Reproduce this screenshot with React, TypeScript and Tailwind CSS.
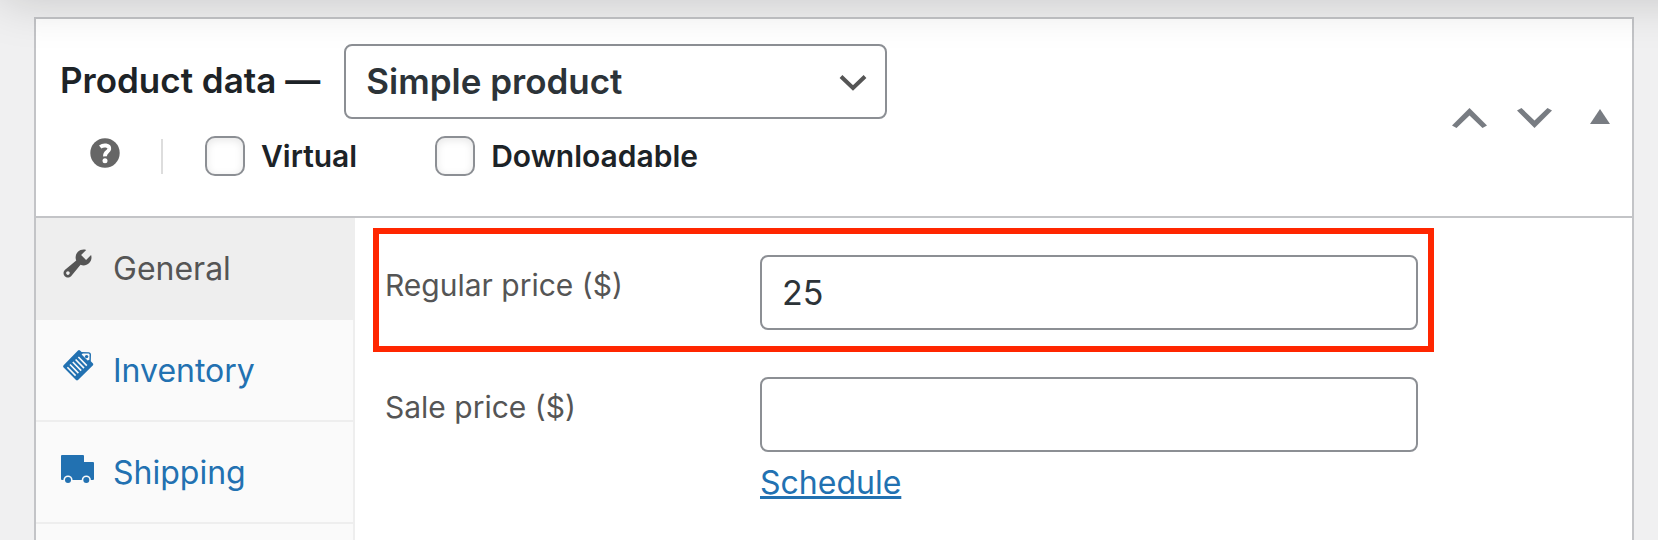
import { useState } from 'react';
import type { ReactNode } from 'react';

interface TabProps {
  label: string;
  icon: ReactNode;
  active?: boolean;
}

function WrenchIcon() {
  return (
    <svg viewBox="0 0 36 36" className="mb-2.5 size-9 shrink-0" fill="currentColor" aria-hidden="true">
      <path
        transform="scale(1.75)"
        fillRule="evenodd"
        d="M16.68 9.77c-1.34 1.34-3.3 1.67-4.95.99l-5.41 6.52c-.99.99-2.59.99-3.58 0s-.99-2.59 0-3.57l6.52-5.42c-.68-1.65-.35-3.61.99-4.95 1.28-1.28 3.12-1.62 4.72-1.06l-2.89 2.89 2.82 2.82 2.86-2.87c.53 1.58.18 3.39-1.08 4.65zM3.81 16.21c.4.39 1.04.39 1.43 0 .4-.4.4-1.04 0-1.43-.39-.4-1.03-.4-1.43 0-.39.39-.39 1.03 0 1.43z"
      />
    </svg>
  );
}

function InventoryIcon() {
  return (
    <svg viewBox="0 0 36 36" className="mb-2.5 size-9 shrink-0" aria-hidden="true">
      <path
        d="M18 2.4Q19 1.6 20 2.4L21.6 4 29 4.2Q31 4.6 31 6.5L30.8 13.2 33 15.6Q33.6 16.4 33 17.2L18 32Q17 32.8 16 32L3.4 19.2Q2.6 18.2 3.6 17.2Z"
        fill="currentColor"
      />
      <path d="M22.8 5.4 28.6 5.6Q29.6 5.8 29.6 6.8L29.4 11.8 27.6 12.4 21.6 6.4Z" fill="#fafafa" />
      <circle cx="26.6" cy="8.6" r="1.7" fill="currentColor" />
      <path
        d="m18.4 9 8.4 8.6M15.6 11.5l8.4 8.6M12.8 14l8.4 8.6M10 16.5l8.4 8.6M7.4 19.2l8.2 8.4"
        stroke="#fafafa"
        strokeWidth="1.6"
      />
    </svg>
  );
}

function TruckIcon() {
  return (
    <svg viewBox="0 0 36 36" className="mb-2.5 size-9 shrink-0" aria-hidden="true">
      <path d="M2 5H23Q24 5 24 6V12H33Q34 12 34 13V29Q34 30 33 30H2Q1 30 1 29V6Q1 5 2 5Z" fill="currentColor" />
      <circle cx="8" cy="30" r="4.6" fill="#fafafa" />
      <circle cx="26.3" cy="30" r="4.6" fill="#fafafa" />
      <circle cx="8" cy="30" r="3" fill="currentColor" />
      <circle cx="26.3" cy="30" r="3" fill="currentColor" />
    </svg>
  );
}

function Tab({ label, icon, active = false }: TabProps) {
  return (
    <li className="-mr-[2px]">
      <a
        href="#"
        className={`flex h-[102px] items-center gap-[17px] border-b-2 border-[#eeeeee] pt-[2px] pl-6 text-[32px] leading-10 ${
          active ? 'bg-[#eeeeee] text-[#555555]' : 'text-[#2271b1]'
        }`}
      >
        {icon}
        {label}
      </a>
    </li>
  );
}

function CheckOption({ id, label }: { id: string; label: string }) {
  return (
    <div className="flex items-center gap-4">
      <input
        id={id}
        type="checkbox"
        className="size-10 appearance-none rounded-[10px] border-2 border-[#8c8f94] bg-white shadow-[inset_0_2px_8px_rgba(0,0,0,0.1)] checked:bg-[#2271b1]"
      />
      <label htmlFor={id} className="text-[30px] leading-10 font-semibold text-[#1d2327]">
        {label}
      </label>
    </div>
  );
}

const FIELD =
  'h-[75px] w-full min-w-0 rounded-lg border-2 border-[#8c8f94] bg-white px-5 text-[34px] text-[#2c3338]';

export default function App() {
  const [price, setPrice] = useState('25');
  const [salePrice, setSalePrice] = useState('');

  return (
    <main className="relative flex min-h-screen flex-col overflow-hidden bg-[#f0f0f1] pt-[17px] pr-6 pl-[34px] font-['Inter',sans-serif]">
      {/* Shadow cast by the bar above the panel */}
      <div className="pointer-events-none absolute -top-20 -right-20 left-0 z-10 h-20 shadow-[0_0_50px_rgba(0,0,0,0.18)]" />

      <section className="flex flex-1 flex-col border-2 border-b-0 border-[#c3c4c7] bg-white">
        <header className="flex items-center justify-between border-b-2 border-[#c3c4c7] pt-[25px] pr-5 pb-10 pl-6">
          <div className="flex flex-col gap-[17px]">
            <div className="flex items-center gap-6">
              <label htmlFor="product-type" className="pb-1 text-[35px] leading-10 font-semibold text-[#1d2327]">
                Product data —
              </label>
              <div className="relative">
                <select
                  id="product-type"
                  className="h-[75px] w-[543px] appearance-none rounded-lg border-2 border-[#8c8f94] bg-white px-5 text-[35px] font-semibold text-[#2c3338]"
                >
                  <option>Simple product</option>
                </select>
                <svg
                  viewBox="0 0 28 18"
                  className="pointer-events-none absolute top-[30px] right-5 h-[18px] w-7"
                  fill="none"
                  stroke="#555555"
                  strokeWidth="4"
                  aria-hidden="true"
                >
                  <path d="M2 2.5 14 14 26 2.5" />
                </svg>
              </div>
            </div>
            <div className="flex items-center pl-[30px]">
              <button type="button" aria-label="Help" className="mb-1.5">
                <svg viewBox="0 0 30 30" className="size-[30px]" aria-hidden="true">
                  <circle cx="15" cy="15" r="14.7" fill="#666666" />
                  <path
                    d="M10.2 9C13.4 6.6 19.6 6.8 19.2 11 18.8 14.2 14.8 13.8 15 18.4"
                    fill="none"
                    stroke="#ffffff"
                    strokeWidth="3.9"
                  />
                  <circle cx="15" cy="22.8" r="2.5" fill="#ffffff" />
                </svg>
              </button>
              <span className="ml-[41px] h-[35px] w-[2px] bg-[#dddddd]" />
              <div className="ml-[42px] flex gap-[78px]">
                <CheckOption id="virtual" label="Virtual" />
                <CheckOption id="downloadable" label="Downloadable" />
              </div>
            </div>
          </div>

          <div className="mt-[15px] flex items-center gap-[30px] text-[#787c82]">
            <button type="button" aria-label="Move up">
              <svg viewBox="0 0 35 20" className="h-5 w-[35px]" fill="currentColor" aria-hidden="true">
                <path d="M17.5 0 35 17.5 30.5 20 17.5 7.5 4.5 20 0 17.5Z" />
              </svg>
            </button>
            <button type="button" aria-label="Move down">
              <svg viewBox="0 0 35 20" className="h-5 w-[35px]" fill="currentColor" aria-hidden="true">
                <path d="M17.5 20 35 2.5 30.5 0 17.5 12.5 4.5 0 0 2.5Z" />
              </svg>
            </button>
            <button type="button" aria-label="Toggle panel" className="ml-2 pr-[2px]">
              <svg viewBox="0 0 20 18" className="h-[18px] w-5" fill="currentColor" aria-hidden="true">
                <path d="M10 0 20 15H0Z" />
              </svg>
            </button>
          </div>
        </header>

        <div className="flex flex-1">
          <ul className="w-[319px] shrink-0 border-r-2 border-[#eeeeee] bg-[#fafafa]">
            <Tab label="General" icon={<WrenchIcon />} active />
            <Tab label="Inventory" icon={<InventoryIcon />} />
            <Tab label="Shipping" icon={<TruckIcon />} />
          </ul>

          <div className="flex-1 pt-[10px] pr-[198px] pl-[18px]">
            <div className="grid grid-cols-[375px_1fr] border-6 border-[#ff2600] pt-[21px] pr-[10px] pb-4 pl-[6px]">
              <label htmlFor="regular-price" className="pt-[10px] text-[30px] leading-10 text-[#555555]">
                Regular price ($)
              </label>
              <input
                id="regular-price"
                type="text"
                className={FIELD}
                value={price}
                onChange={(e) => setPrice(e.target.value)}
              />
            </div>
            <div className="mt-[25px] grid grid-cols-[375px_1fr] pr-4 pl-3">
              <label htmlFor="sale-price" className="pt-[10px] text-[30px] leading-10 text-[#555555]">
                Sale price ($)
              </label>
              <div>
                <input
                  id="sale-price"
                  type="text"
                  className={FIELD}
                  value={salePrice}
                  onChange={(e) => setSalePrice(e.target.value)}
                />
                <a
                  href="#"
                  className="mt-[11px] inline-block text-[32px] leading-10 text-[#2271b1] underline decoration-3 underline-offset-2"
                >
                  Schedule
                </a>
              </div>
            </div>
          </div>
        </div>
      </section>
    </main>
  );
}
